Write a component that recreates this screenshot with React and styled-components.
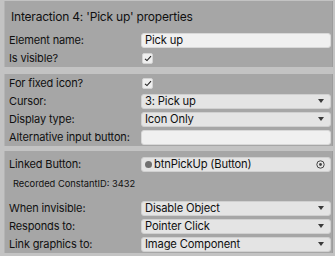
import React from 'react'
import styled, { createGlobalStyle } from 'styled-components'

const GlobalStyle = createGlobalStyle`
  html, body {
    margin: 0;
    padding: 0;
    background: #c3c3c3;
  }
  body {
    font-family: Inter, "Liberation Sans", sans-serif;
    font-size: 11px;
    letter-spacing: -0.15px;
    color: #101010;
  }
`

const Page = styled.div`
  width: 335px;
  height: 256px;
  box-sizing: border-box;
  padding: 1px 2px 0 4px;
  display: flex;
  flex-direction: column;
  gap: 7px;
  background: #c3c3c3;
`

const Panel = styled.section`
  background: #a6a6a6;
  border-left: 1px solid #b4b4b4;
  border-right: 1px solid #9c9c9c;
  padding: ${props => props.pad || '0'};
  margin-top: ${props => props.mt || 0}px;
  display: flex;
  flex-direction: column;
`

const Header = styled.div`
  height: 30px;
  display: flex;
  align-items: center;
  padding-left: 6px;
  font-size: 12px;
  letter-spacing: -0.2px;
`

const Row = styled.div`
  height: 18px;
  display: grid;
  grid-template-columns: 132px 1fr;
  align-items: center;
  padding-left: 4px;
  padding-right: 1px;
`

const Label = styled.span`
  white-space: nowrap;
`

const Note = styled.div`
  height: 20px;
  display: flex;
  align-items: center;
  padding-left: 8px;
  font-size: 9.3px;
  letter-spacing: 0;
  margin-bottom: 6px;
`

const Field = styled.div`
  height: 15px;
  box-sizing: border-box;
  border-radius: 3px;
  background: ${props => props.light ? '#f0f0f0' : '#e4e4e4'};
  border: 1px solid ${props => props.light ? '#d8d8d8' : '#d0d0d0'};
  display: flex;
  align-items: center;
  padding: 0 5px 0 3px;
  font-size: 11.2px;
`

const Value = styled.span`
  flex: 1;
  white-space: nowrap;
`

const Arrow = styled.span`
  width: 0;
  height: 0;
  border-left: 3px solid transparent;
  border-right: 3px solid transparent;
  border-top: 4px solid #3a3a3a;
  margin-right: 1px;
`

const Check = styled.div`
  width: 11px;
  height: 11px;
  box-sizing: border-box;
  border-radius: 2px;
  background: #efefef;
  border: 1px solid #d4d4d4;
  margin-left: 1px;
  display: flex;
  align-items: center;
  justify-content: center;
`

const Dot = styled.span`
  width: 7px;
  height: 7px;
  border-radius: 50%;
  background: #707070;
  margin-right: 2px;
`

const Tick = () => (
  <svg width="8" height="7" viewBox="0 0 8 7">
    <path d="M1 3.8 L3 5.6 L7 1.2" fill="none" stroke="#222" strokeWidth="1.1" />
  </svg>
)

const Target = () => (
  <svg width="9" height="9" viewBox="0 0 9 9">
    <circle cx="4.5" cy="4.5" r="3.7" fill="none" stroke="#444" strokeWidth="1" />
    <circle cx="4.5" cy="4.5" r="1.4" fill="#444" />
  </svg>
)

const Dropdown = ({ value }) => (
  <Field>
    <Value>{value}</Value>
    <Arrow />
  </Field>
)

const CheckRow = ({ label }) => (
  <Row>
    <Label>{label}</Label>
    <Check><Tick /></Check>
  </Row>
)

const App = () => (
  <>
    <GlobalStyle />
    <Page>
      <Panel>
        <Header>Interaction 4: 'Pick up' properties</Header>
        <Row>
          <Label>Element name:</Label>
          <Field light><Value>Pick up</Value></Field>
        </Row>
        <CheckRow label="Is visible?" />
      </Panel>

      <Panel>
        <CheckRow label="For fixed icon?" />
        <Row>
          <Label>Cursor:</Label>
          <Dropdown value="3: Pick up" />
        </Row>
        <Row>
          <Label>Display type:</Label>
          <Dropdown value="Icon Only" />
        </Row>
        <Row>
          <Label>Alternative input button:</Label>
          <Field light />
        </Row>
      </Panel>

      <Panel pad="4px 0 0 0" mt={-2}>
        <Row>
          <Label>Linked Button:</Label>
          <Field>
            <Dot />
            <Value>btnPickUp (Button)</Value>
            <Target />
          </Field>
        </Row>
        <Note>Recorded ConstantID: 3432</Note>
        <Row>
          <Label>When invisible:</Label>
          <Dropdown value="Disable Object" />
        </Row>
        <Row>
          <Label>Responds to:</Label>
          <Dropdown value="Pointer Click" />
        </Row>
        <Row>
          <Label>Link graphics to:</Label>
          <Dropdown value="Image Component" />
        </Row>
      </Panel>
    </Page>
  </>
)

export default App
